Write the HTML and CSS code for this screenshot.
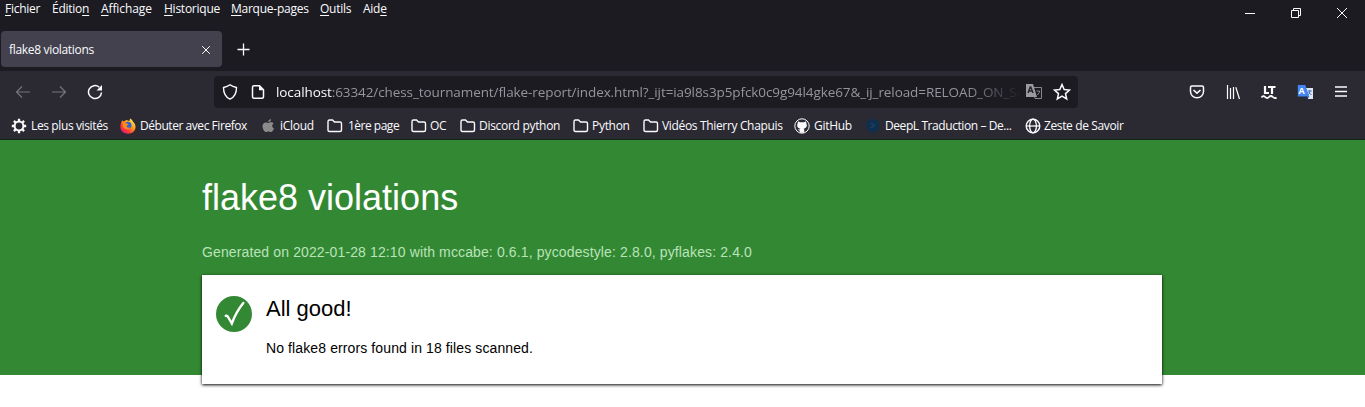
FILE: index.html
```html
<!DOCTYPE html>
<html lang="fr">
<head>
<meta charset="utf-8">
<title>flake8 violations</title>
<link rel="stylesheet" href="styles.css">
</head>
<body>
<div class="browser">
  <header class="titlebar">
    <nav class="menu">
      <span><u>F</u>ichier</span><span>Éditio<u>n</u></span><span><u>A</u>ffichage</span><span><u>H</u>istorique</span><span><u>M</u>arque-pages</span><span><u>O</u>utils</span><span>Aid<u>e</u></span>
    </nav>
    <div class="window-buttons">
      <svg width="12" height="12" viewBox="0 0 12 12"><path d="M1 6.500h10"/></svg>
      <svg width="12" height="12" viewBox="0 0 12 12"><path d="M1.500 3.500h7v7h-7zM3.500 3.500v-2h7v7h-2"/></svg>
      <svg width="12" height="12" viewBox="0 0 12 12"><path d="M1 1l10 10M11 1L1 11"/></svg>
    </div>
  </header>
  <div class="tabs">
    <div class="tab"><span>flake8 violations</span><svg width="10" height="10" viewBox="0 0 10 10"><path d="M1.200 1.200l7.600 7.600M8.800 1.200L1.200 8.800"/></svg></div>
    <svg class="new-tab" width="13" height="13" viewBox="0 0 13 13"><path d="M6.500 .5v12M.5 6.500h12"/></svg>
  </div>
  <div class="toolbar">
    <div class="nav-buttons">
      <svg class="dim" width="16" height="16" viewBox="0 0 16 16"><path d="M15 8H1.500M7 2.500L1.500 8 7 13.500"/></svg>
      <svg class="dim" width="16" height="16" viewBox="0 0 16 16"><path d="M1 8h13.500M9 2.500L14.500 8 9 13.500"/></svg>
      <svg width="16" height="16" viewBox="0 0 16 16"><path stroke-width="1.500" d="M12.300 3.200A6.500 6.500 0 1 0 14.500 8.500"/><path class="solid" d="M15 1v5.500H9.500z"/></svg>
    </div>
    <div class="urlbar">
      <svg width="16" height="16" viewBox="0 0 16 16"><path stroke-width="1.400" d="M8 .8c2 1.500 4 2.200 6.500 2.700 0 5-1.500 9.500-6.500 11.700C3 13 1.500 8.500 1.500 3.500 4 3 6 2.300 8 .8z"/></svg>
      <svg class="page-icon" width="14" height="16" viewBox="0 0 14 16"><path stroke-width="1.500" d="M3 1.700h5.500l4 4v7.100q0 1.500-1.500 1.500H3q-1.500 0-1.500-1.500V3.200Q1.500 1.700 3 1.700z"/><path class="solid" d="M8 1.500v4.700h4.700z"/></svg>
      <div class="url"><b>localhost</b>:63342/chess_tournament/flake-report/index.html?_ijt=ia9l8s3p5pfck0c9g94l4gke67&amp;_ij_reload=RELOAD_ON_SA</div>
      <svg class="translate" width="18" height="18" viewBox="0 0 18 18"><path d="M7 4.500h9.500v11H10z"/><path class="gray" d="M1 1h7l4 13H1z"/><path class="letter" d="M3 10l2.200-6h.6L8 10M4 8h3"/><path d="M11.500 8h3v1.500l-1.700 1.500v1"/></svg>
      <svg class="star" width="18" height="18" viewBox="0 0 18 18"><path stroke-width="1.500" d="M9 1.500l2.200 5 5.300.5-4 3.600 1.200 5.400L9 13.200 4.300 16l1.200-5.400-4-3.600 5.300-.5z"/></svg>
    </div>
    <div class="actions">
      <svg width="16" height="16" viewBox="0 0 16 16"><path stroke-width="1.500" d="M3 2h10q1.500 0 1.500 1.500v4a6.500 6.300 0 0 1-13 0v-4Q1.500 2 3 2z"/><path stroke-width="1.600" d="M4.500 6L8 9.200 11.500 6"/></svg>
      <svg width="16" height="16" viewBox="0 0 16 16"><path stroke-width="1.200" d="M2.500 1v14M5.500 4v11M8.500 3v12M10.800 3.200L14.500 15"/></svg>
      <svg width="18" height="16" viewBox="0 0 18 16"><path stroke-width="2.200" d="M5 2v7h4M8 3h7.500M12 3v7"/><path stroke-width="1.800" d="M1.500 13.500q1.800-2.500 3.700-.5t3.800 0 3.800 0 3.700.5"/></svg>
      <svg class="google" width="16" height="16" viewBox="0 0 16 16"><path fill="#dce6f5" d="M7 4h9v11h-5z"/><path fill="#4285f4" d="M.8 1h7.500l4 11.500H.8z"/><path fill="#173c83" d="M8.500 12.500h3.700l-2 3z"/><text x="1.500" y="10">A</text><path stroke="#4474bc" d="M10.800 7h4M12.800 6v1q0 3-2 4M11.500 8l3 3"/></svg>
      <svg width="14" height="16" viewBox="0 0 14 16"><path stroke-width="1.300" d="M1 3h12M1 7.500h12M1 12h12"/></svg>
    </div>
  </div>
  <nav class="bookmarks">
    <a><svg width="16" height="16" viewBox="0 0 16 16"><circle cx="8" cy="8" r="4.400" stroke-width="2"/><path stroke-width="2.300" d="M8 .8v3M8 12.200v3M.8 8h3M12.200 8h3M2.900 2.900L5 5M11 11l2.100 2.100M2.900 13.100L5 11M11 5l2.100-2.100"/></svg><span>Les plus visités</span></a>
    <a><svg class="firefox" width="16" height="16" viewBox="0 0 16 16"><defs><linearGradient id="fire" x1="1" y1="0" x2=".2" y2="1"><stop offset=".1" stop-color="#fff44f"/><stop offset=".45" stop-color="#ff9a1e"/><stop offset=".75" stop-color="#ff3d36"/><stop offset="1" stop-color="#e31587"/></linearGradient></defs><path fill="url(#fire)" d="M1.500 3.800l1-1.600 1 1.200L6.500 2l3 1L10 .5c2 1 2.700 2.300 3.200 3.500 3 2.500 3 7 .5 9.500-3 3-8.700 2.800-11.500 0C-.3 11 .1 7 1.500 3.800z"/><circle cx="8" cy="7.300" r="3.500" fill="#3064d0"/><path fill="#ff8b16" d="M3 4l4 1.500 1.500 1L6.500 8c.5 2 2.500 2 4 1.300-1.500 3-6.500 2.500-7.500-.8z"/></svg><span>Débuter avec Firefox</span></a>
    <a><svg class="apple" width="16" height="16" viewBox="0 0 16 16"><path d="M11 1c.1 1.700-1 3-2.700 3.200C8.200 2.600 9.300 1.300 11 1zM8.400 5c.7 0 1.500-.7 2.800-.7 1 0 1.900.5 2.400 1.300-2.100 1.300-1.700 4 .4 4.900-.7 1.900-1.900 3.600-3.200 3.600-.9 0-1.300-.5-2.300-.5s-1.500.5-2.300.5C4.500 14.100 2.500 11 2.500 8.300c0-2.600 1.600-3.900 3.300-3.900 1.100 0 1.900.6 2.600.6z"/></svg><span>iCloud</span></a>
    <a><svg width="16" height="16" viewBox="0 0 16 16"><path class="folder" d="M2.500 2h3l2 2H13q1.500 0 1.500 1.500v6.500q0 1.500-1.500 1.500H2.500Q1 13.500 1 12V3.500Q1 2 2.500 2z"/></svg><span>1ère page</span></a>
    <a><svg width="16" height="16" viewBox="0 0 16 16"><path class="folder" d="M2.500 2h3l2 2H13q1.500 0 1.500 1.500v6.500q0 1.500-1.500 1.500H2.500Q1 13.500 1 12V3.500Q1 2 2.500 2z"/></svg><span>OC</span></a>
    <a><svg width="16" height="16" viewBox="0 0 16 16"><path class="folder" d="M2.500 2h3l2 2H13q1.500 0 1.500 1.500v6.500q0 1.500-1.500 1.500H2.500Q1 13.500 1 12V3.500Q1 2 2.500 2z"/></svg><span>Discord python</span></a>
    <a><svg width="16" height="16" viewBox="0 0 16 16"><path class="folder" d="M2.500 2h3l2 2H13q1.500 0 1.500 1.500v6.500q0 1.500-1.500 1.500H2.500Q1 13.500 1 12V3.500Q1 2 2.500 2z"/></svg><span>Python</span></a>
    <a><svg width="16" height="16" viewBox="0 0 16 16"><path class="folder" d="M2.500 2h3l2 2H13q1.500 0 1.500 1.500v6.500q0 1.500-1.500 1.500H2.500Q1 13.500 1 12V3.500Q1 2 2.500 2z"/></svg><span>Vidéos Thierry Chapuis</span></a>
    <a><svg width="16" height="16" viewBox="0 0 16 16"><circle cx="8" cy="8" r="7.200"/><path class="solid" d="M4 3.200l2 1h4l2-1 .4 2.300c1.200 2.700-.2 4.800-2.700 5.100l.6 1.400v2.800H5.700v-2l-2.200-1.400 2.300.2.500-1C3.500 10.300 2.500 8 3.600 5.500z"/></svg><span>GitHub</span></a>
    <a><svg class="deepl" width="16" height="16" viewBox="0 0 16 16"><path fill="#0f2f4e" d="M7.500 0L14 3.700v7.600l-4 2.500V16l-3-1.800-5.500-3.100V3.700z"/><path stroke="#244863" d="M5.500 5l4.500 2.500-4.500 2.500"/></svg><span>DeepL Traduction – De...</span></a>
    <a><svg width="16" height="16" viewBox="0 0 16 16"><circle cx="8" cy="8" r="6.800" stroke-width="1.400"/><ellipse cx="8" cy="8" rx="3.400" ry="6.800" stroke-width="1.300"/><path stroke-width="1.300" d="M1 8h14"/></svg><span>Zeste de Savoir</span></a>
  </nav>
</div>
<main class="report">
  <div class="content">
    <h1>flake8 violations</h1>
    <p class="generated">Generated on 2022-01-28 12:10 with mccabe: 0.6.1, pycodestyle: 2.8.0, pyflakes: 2.4.0</p>
    <section class="card">
      <svg class="check" width="36" height="36" viewBox="0 0 36 36"><circle cx="18" cy="18" r="18"/><path d="M9.800 19.800q1.700-.2 2.600 1.700l3.400 6Q20 16 27.300 7"/></svg>
      <div><h2>All good!</h2><p>No flake8 errors found in 18 files scanned.</p></div>
    </section>
  </div>
</main>
</body>
</html>
```
FILE: styles.css
```css
* { box-sizing: border-box; }
body { margin: 0; height: 407px; overflow: hidden; background: #fff; font-family: "Liberation Sans", Arial, sans-serif; }
svg { display: block; flex: none; fill: none; stroke: #fbfbfe; }
.solid { fill: #fbfbfe; stroke: none; }
.browser { height: 140px; background: #2b2a33; border-bottom: 1px solid #102312; color: #fbfbfe; font: 12px/16px "Open Sans", "Noto Sans", sans-serif; white-space: nowrap; }
.titlebar { display: flex; justify-content: space-between; height: 27px; background: #1c1b22; }
.menu { display: flex; gap: 12px; padding: 1px 0 0 5px; letter-spacing: -.25px; }
.menu span { width: 35px; }
.menu span:nth-child(2) { width: 37px; }
.menu span:nth-child(3) { width: 51px; letter-spacing: -.1px; }
.menu span:nth-child(4) { width: 55px; }
.menu span:nth-child(5) { width: 77px; }
.menu span:nth-child(6) { width: 31px; }
.menu u { text-underline-offset: 2px; text-decoration-thickness: 1px; }
.window-buttons { display: flex; gap: 34px; padding: 7px 17px 0 0; }
.tabs { display: flex; height: 44px; padding: 4px 0 0 1px; background: #1c1b22; }
.tab { display: flex; align-items: center; justify-content: space-between; width: 221px; height: 36px; padding: 1px 11px 0 8px; border-radius: 4px; background: #42414d; letter-spacing: -.32px; }
.new-tab { margin: 12px 0 0 15px; stroke-width: 1.3; }
.toolbar { display: flex; align-items: center; height: 41px; }
.nav-buttons { display: flex; gap: 20px; width: 214px; padding-left: 15px; }
.dim { stroke: #75747c; stroke-width: 1.2; }
.urlbar { display: flex; align-items: center; width: 864px; height: 32px; padding-left: 8px; border-radius: 4px; background: #1c1b22; }
.page-icon { margin-left: 13px; }
.url { width: 745px; height: 20px; margin-left: 11px; color: #96959b; font-size: 13.500px; line-height: 20px; letter-spacing: -.09px; -webkit-mask-image: linear-gradient(90deg, #000 690px, transparent 745px); mask-image: linear-gradient(90deg, #000 690px, transparent 745px); }
.url b { color: #fbfbfe; font-weight: 400; }
.translate { margin-left: 4px; stroke: #88878e; }
.gray { fill: #9b9aa0; stroke: none; }
.letter { stroke: #29282f; stroke-width: 1.500; }
.star { margin-left: 10px; }
.actions { display: flex; align-items: center; gap: 20px; margin-left: 111px; }
.actions svg:nth-child(3) { margin-left: -1px; }
.actions svg:nth-child(4) { margin-left: -1px; }
.actions svg:last-child { margin-left: 1px; }
.google { stroke: none; }
.google text { fill: #fff; font: bold 9px "Open Sans", sans-serif; }
.bookmarks { display: flex; height: 27px; padding: 6px 0 0 11px; letter-spacing: -.3px; }
.bookmarks a { display: flex; gap: 4px; width: 109px; }
.bookmarks a:first-child { letter-spacing: -.38px; }
.bookmarks a:nth-child(2) { width: 140px; letter-spacing: -.45px; }
.bookmarks a:nth-child(3) { width: 67px; }
.bookmarks a:nth-child(4) { width: 84px; gap: 5px; letter-spacing: -.5px; }
.bookmarks a:nth-child(5) { width: 49px; gap: 3px; }
.bookmarks a:nth-child(6) { width: 113px; gap: 3px; }
.bookmarks a:nth-child(7) { width: 70px; gap: 3px; }
.bookmarks a:nth-child(8) { width: 151px; gap: 3px; letter-spacing: -.34px; }
.bookmarks a:nth-child(9) { width: 71px; }
.bookmarks a:nth-child(10) { width: 160px; letter-spacing: -.42px; }
.bookmarks a:nth-child(11) { gap: 3px; letter-spacing: -.37px; }
.folder { stroke-width: 1.400; }
.firefox, .deepl { stroke: none; }
.apple { fill: #8b8b8b; stroke: none; }
.report { height: 235px; background: #338833; }
.content { width: 960px; margin-left: 202px; padding-top: 37px; }
h1 { margin: 0; color: #fff; font-size: 36px; font-weight: 400; line-height: 42px; }
.generated { margin: 25px 0 14px; color: #b9e3b9; font-size: 14px; line-height: 17px; letter-spacing: .125px; }
.card { display: flex; gap: 14px; height: 109px; padding: 21px 14px; background: #fff; box-shadow: 0 1px 3px #000; }
.check { fill: #338833; stroke: none; }
.check path { fill: none; stroke: #fff; stroke-width: 2.400; stroke-linecap: round; }
h2 { margin: 0 0 18px; color: #000; font-size: 22px; font-weight: 400; line-height: 26px; }
.card p { margin: 0; color: #000; font-size: 14px; line-height: 17px; letter-spacing: .11px; }
```
